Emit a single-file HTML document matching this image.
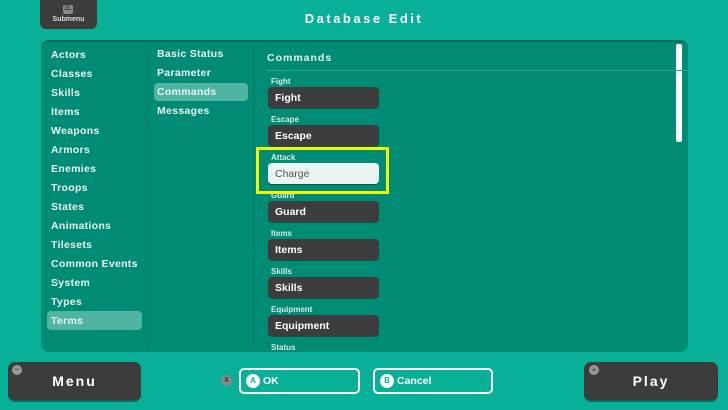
<html><head><style>
body{margin:0;width:728px;height:410px;background:#07b096;font-family:"Liberation Sans",sans-serif;position:relative;overflow:hidden;color:#e8f5f1}
.a{position:absolute}
.panel{left:41px;top:40px;width:647px;height:312px;background:#008b74;border-radius:8px;border-top:2px solid #046a58;box-sizing:border-box}
.li{position:absolute;font-size:10.5px;font-weight:bold;letter-spacing:.3px;margin-top:1px}
.lbl{position:absolute;left:271px;font-size:8px;font-weight:bold;color:#d5ece6;margin-top:1px}
.box{position:absolute;left:268px;width:111px;height:21px;background:#3d3d3d;border-radius:4px;font-size:10.5px;font-weight:bold;color:#fff;line-height:22px;text-indent:7px;box-shadow:0 1px 0 #0a5a4c}
.bb{position:absolute;background:#3c3c3c;border-radius:7px;color:#fff;font-weight:bold;font-size:14px;letter-spacing:2px;text-align:center;line-height:38px;box-shadow:0 2px 0 #0a6a58}
.ob{position:absolute;top:368px;height:26px;border:2px solid #fff;border-radius:5px;box-sizing:border-box;color:#fff;font-size:10.5px;font-weight:bold;display:flex;align-items:center}
.ci{display:inline-block;width:14px;height:14px;border-radius:7px;background:#fff;color:#07b096;font-size:8px;text-align:center;line-height:14px;margin:0 3px 0 5px}
</style></head><body>
<div class="a" style="left:40px;top:-4px;width:57px;height:33px;background:#3c3c3c;border-radius:6px"></div>
<div class="a" style="left:63px;top:5px;width:10px;height:9px;background:#888;border-radius:2px;font-size:6px;color:#333;text-align:center;line-height:9px;font-weight:bold">ZL</div>
<div class="a" style="left:40px;top:16px;width:57px;text-align:center;font-size:7px;font-weight:bold;color:#ddd">Submenu</div>
<div class="a" style="left:0;width:728px;top:11px;text-align:center;font-size:13px;font-weight:bold;letter-spacing:2.5px;color:#fff">Database Edit</div>
<div class="a panel"></div>
<div class="a" style="left:147px;top:46px;width:1px;height:304px;background:#037562"></div>
<div class="a" style="left:253px;top:46px;width:1px;height:304px;background:#037562"></div>
<div class="a" style="left:676px;top:44px;width:6px;height:98px;background:#fff;border-radius:2px"></div>
<div class="a" style="left:47px;top:311px;width:95px;height:19px;background:#4fb4a0;border-radius:4px"></div>
<div class="a" style="left:154px;top:83px;width:94px;height:18px;background:#4fb4a0;border-radius:4px"></div>
<div class="li" style="left:51px;top:48px">Actors</div>
<div class="li" style="left:51px;top:67px">Classes</div>
<div class="li" style="left:51px;top:86px">Skills</div>
<div class="li" style="left:51px;top:105px">Items</div>
<div class="li" style="left:51px;top:124px">Weapons</div>
<div class="li" style="left:51px;top:143px">Armors</div>
<div class="li" style="left:51px;top:162px">Enemies</div>
<div class="li" style="left:51px;top:181px">Troops</div>
<div class="li" style="left:51px;top:200px">States</div>
<div class="li" style="left:51px;top:219px">Animations</div>
<div class="li" style="left:51px;top:238px">Tilesets</div>
<div class="li" style="left:51px;top:257px">Common Events</div>
<div class="li" style="left:51px;top:276px">System</div>
<div class="li" style="left:51px;top:295px">Types</div>
<div class="li" style="left:51px;top:314px">Terms</div>
<div class="li" style="left:157px;top:47px">Basic Status</div>
<div class="li" style="left:157px;top:66px">Parameter</div>
<div class="li" style="left:157px;top:85px">Commands</div>
<div class="li" style="left:157px;top:104px">Messages</div>
<div class="li" style="left:267px;top:51px;letter-spacing:1px">Commands</div>
<div class="a" style="left:267px;top:70px;width:421px;height:1px;background:#2a9f8a"></div>
<div class="lbl" style="top:76px">Fight</div><div class="box" style="top:87px">Fight</div>
<div class="lbl" style="top:114px">Escape</div><div class="box" style="top:125px">Escape</div>
<div class="lbl" style="top:190px">Guard</div><div class="box" style="top:201px">Guard</div>
<div class="a" style="left:256px;top:147px;width:133px;height:47px;border:3px solid #f5f500;box-sizing:border-box;background:#008b74"></div>
<div class="lbl" style="top:152px">Attack</div><div class="box" style="top:163px;background:#eaf5f2;color:#555;font-weight:normal">Charge</div>
<div class="lbl" style="top:228px">Items</div><div class="box" style="top:239px">Items</div>
<div class="lbl" style="top:266px">Skills</div><div class="box" style="top:277px">Skills</div>
<div class="lbl" style="top:304px">Equipment</div><div class="box" style="top:315px">Equipment</div>
<div class="lbl" style="top:342px">Status</div>
<div class="bb" style="left:8px;top:362px;width:133px;height:38px">Menu</div>
<div class="bb" style="left:584px;top:362px;width:134px;height:38px">Play</div>
<div class="a" style="left:12px;top:365px;width:10px;height:10px;border-radius:5px;background:#999;color:#333;font-size:9px;line-height:9px;text-align:center">−</div>
<div class="a" style="left:589px;top:365px;width:10px;height:10px;border-radius:5px;background:#999;color:#333;font-size:9px;line-height:10px;text-align:center">+</div>
<div class="a" style="left:221px;top:375px;width:11px;height:11px;border-radius:6px;background:#888;color:#333;font-size:7px;line-height:11px;text-align:center;font-weight:bold">X</div>
<div class="ob" style="left:239px;width:121px"><span class="ci">A</span>OK</div>
<div class="ob" style="left:373px;width:120px"><span class="ci">B</span>Cancel</div>
</body></html>
